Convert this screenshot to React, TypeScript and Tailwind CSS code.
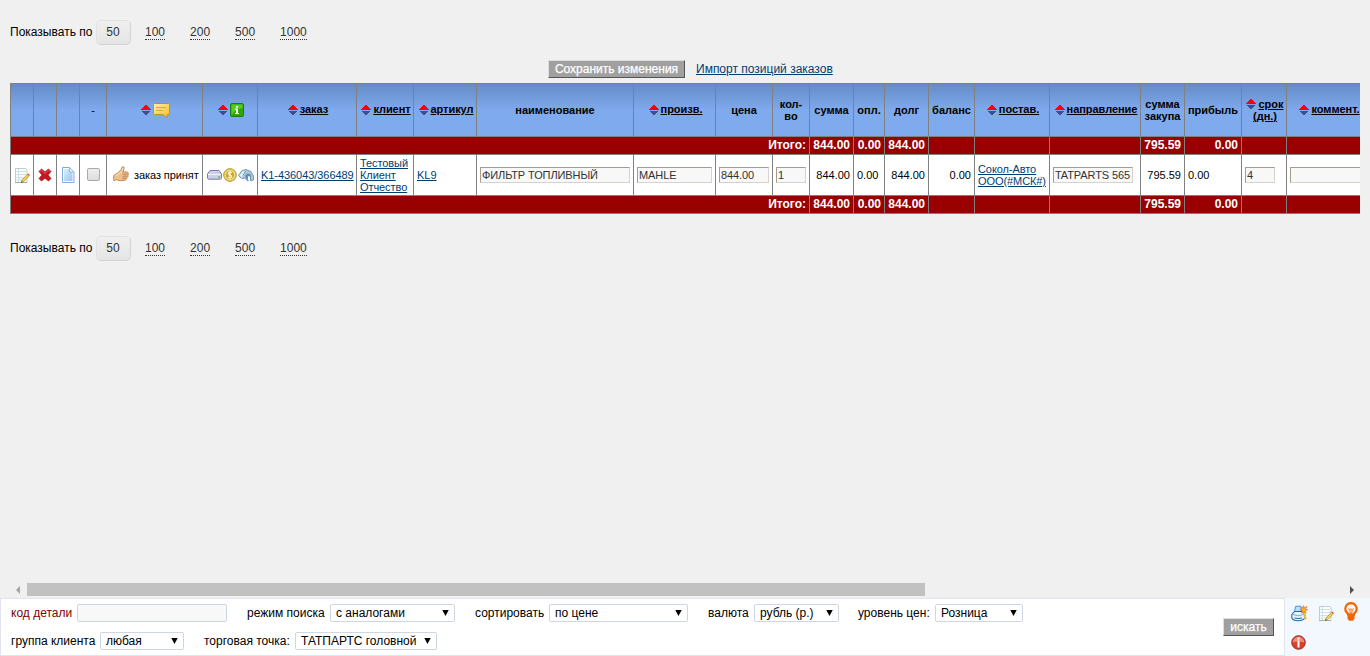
import React from "react";

const Sort = () => (
  <svg width="10" height="12" viewBox="0 0 10 12" shapeRendering="crispEdges" className="relative inline-block shrink-0">
    <path d="M0 6 5 .5 10 6z" fill="#fb0008" />
    <path d="M0 6.500 5 12l5-5.500z" fill="#3d4f8f" />
  </svg>
);

const Note = () => (
  <svg width="16" height="17" viewBox="0 0 16 17" className="block shrink-0">
    <path d="M1.500 1.500h10l1.500 1v13H1.500z" fill="#fbfdfc" stroke="#c3cdcb" />
    <path d="M2 4.500h10M2 7.500h10M2 10.500h9M2 13h8M4.500 2v13" stroke="#cddfe0" strokeWidth=".9" />
    <path d="M1 15.500h12" stroke="#9fb3ae" />
    <path d="M13.500 7.200l1.700 1.700-5.500 5.700-2.300.9.600-2.500z" fill="#f8d64a" stroke="#8e752e" strokeWidth=".6" />
    <path d="m13.300 7.200 1.900 1.900.7-1.200-1.500-1.500z" fill="#e2553a" />
    <path d="m7.200 15.700.6-1.500.9.900z" fill="#222" />
  </svg>
);

const Cross = () => (
  <svg width="14" height="14" viewBox="0 0 14 14" className="block shrink-0">
    <path d="m1 3.500 2.500-2.500L7 4l3.500-3L13 3.500 9.900 7l3.100 3.500-2.500 2.500L7 10l-3.500 3L1 10.500 4.100 7z" fill="#c9161e" stroke="#a50f16" strokeWidth=".8" strokeLinejoin="round" />
    <path d="m2 3.500 1.500-1.300L7 5.500l3.500-3.300L12 3.400" fill="none" stroke="#e8686b" strokeWidth=".9" />
  </svg>
);

const Page = () => (
  <svg width="14" height="16" viewBox="0 0 14 16" className="block shrink-0">
    <defs>
      <linearGradient id="page" x1="0" y1="0" x2="1" y2="1">
        <stop offset="0" stopColor="#dcefff" />
        <stop offset="1" stopColor="#8fc6fb" />
      </linearGradient>
    </defs>
    <path d="M1.500.5h7L13 5v10.500H1.500z" fill="#fff" stroke="#7fabdc" />
    <path d="M3 2h5l3.500 3.500V14H3z" fill="url(#page)" />
    <path d="M8.500.5V5H13z" fill="#f4faff" stroke="#7eaee0" strokeWidth=".8" />
  </svg>
);

const Comment = () => (
  <svg width="17" height="15" viewBox="0 0 17 15" className="block shrink-0">
    <defs>
      <linearGradient id="cm" x1="0" y1="0" x2="1" y2="1">
        <stop offset="0" stopColor="#fff3a0" />
        <stop offset="1" stopColor="#f6bd20" />
      </linearGradient>
    </defs>
    <path d="M1.500.5h14l1 1v9l-1 1h-1.300v3L9.800 11.500H1.500l-1-1v-9z" fill="url(#cm)" stroke="#c7901b" />
    <path d="M3 4.500h10M3 7.500h7" stroke="#d3ae48" />
  </svg>
);

const Info = () => (
  <svg width="14" height="14" viewBox="0 0 14 14" className="block shrink-0">
    <rect x=".5" y=".5" width="13" height="13" rx="1.500" fill="#2fa60a" stroke="#178014" />
    <path d="M1.500 12V1.500H12.500V5Q5 6 1.500 12z" fill="#5cc926" />
    <path d="M6 3h2v1.500H6zM5 5.500h3V10h1v1H5v-1h1V6.500H5z" fill="#fff" />
  </svg>
);

const Thumb = () => (
  <svg width="16" height="16" viewBox="0 0 16 16" className="relative -top-px block shrink-0">
    <path d="M.8 9.500 5 6.800 8.200 3.500 9.200.9q2-.6 2 1.200L10 6h4q1.500.3 1.200 1.600.6 1-.3 2 .3 1.200-.8 1.900.1 1.300-1.100 1.600-.2 1.400-1.700 1.500H6L3 13.500l-2 1.300q-1-2.300-.2-5.300z" fill="#efc08c" stroke="#b98049" strokeWidth=".9" />
    <path d="M9.500 8.200h5M9.500 10.200h4.700M9 12.300h4" stroke="#a97545" strokeWidth=".8" />
    <path d="M2 10 6 7.800 9.200 4.300l1-2.500" stroke="#ffe3bd" fill="none" />
  </svg>
);

const Drive = () => (
  <svg width="15" height="10" viewBox="0 0 15 10" className="block shrink-0">
    <path d="M3 .5h9l2.500 3.500v4l-1 1.200h-12L.5 8V4z" fill="#cdcdee" stroke="#7a7aab" />
    <path d="M1 4.500h13" stroke="#f4f4ff" />
    <circle cx="12" cy="6.900" r="1" fill="#5bc236" />
  </svg>
);

const Coin = () => (
  <svg width="14" height="14" viewBox="0 0 14 14" className="relative -left-px block shrink-0">
    <circle cx="7" cy="7" r="6.300" fill="#f4d455" stroke="#a8912b" />
    <circle cx="7" cy="7" r="4.700" fill="#c9a838" stroke="#fbeea4" strokeWidth=".8" />
    <path d="M9 4.700Q7 3.600 5.500 4.700 5 6.500 7 7t1.800 2.200q-1.500 1.300-3.800.1M7 3v8" fill="none" stroke="#fff9d6" strokeWidth="1.100" />
  </svg>
);

const Truck = () => (
  <svg width="16" height="13" viewBox="0 0 16 13" className="relative -left-[2px] block shrink-0">
    <path d="M.5 6.500 4 1.500 8 .5 13 2.500l2.500 4.500v4l-2.500.9-1.500-1.400L9.500 12 7 9 3.500 9.500z" fill="#abc8df" stroke="#6f93af" strokeWidth=".9" />
    <path d="m1.500 6.500 3-4L8 1.500 5.500 5.500 4 8.500z" fill="#e3f1fb" />
    <path d="M7.500 6q2.500-3 5.500 0v4.500h-1V7.500h-2v4L7.500 8.500z" fill="#5f8fb4" />
    <path d="M10 7.500h2v3.500h-2z" fill="#fff" />
    <path d="M5 6.500 7.500 2" stroke="#6f93af" />
  </svg>
);

const Printer = () => (
  <svg width="17" height="17" viewBox="0 0 17 17" className="relative block shrink-0">
    <path d="M4.500 1.500 9.500 1l1.500 6H3.500z" fill="#b9defc" stroke="#4a93de" />
    <path d="M.8 9.500 3.500 6.500h7.500L14 9.500V13q-2 2.700-7 2.700T.8 13z" fill="#e9f2fa" stroke="#2469ab" strokeWidth="1.100" />
    <path d="M2 9.500q5 2.500 10.500 0" stroke="#86abd0" fill="none" />
    <path d="M3.500 13q3.500 1.200 7.500 0" stroke="#2469ab" fill="none" />
    <path d="m12.700 5 1.500 8 1 1.200" stroke="#e0c43c" strokeWidth="2" fill="none" />
    <path d="m12.500.5.800 2.300 2.700-1.500-1.300 2.700 2 .8-2.300.9.700 2.300-2.400-1.400-2 1.700.5-2.600-2.400-.6 2.300-1.200-.8-2.100 2 .9z" fill="#f7b020" stroke="#e4571b" strokeWidth=".5" />
  </svg>
);

const Bulb = () => (
  <svg width="14" height="19" viewBox="0 0 14 19" className="block shrink-0">
    <path d="M7 1.100a5.700 5.700 0 0 0-3.400 10.200l.7 1.700h5.400l.7-1.700A5.700 5.700 0 0 0 7 1.100z" fill="#fff6ee" stroke="#f26500" strokeWidth="2.200" />
    <path d="m4.300 6.500 1.500 1.300L7 6.800l1.200 1 1.500-1.300M5.900 7.800 6.300 12M8.100 7.800 7.700 12" fill="none" stroke="#f26500" strokeWidth=".9" />
    <path d="M3.500 11.500h7v5L9 18.700H5l-1.500-2.200z" fill="#f26500" />
  </svg>
);

const RedInfo = () => (
  <svg width="15" height="15" viewBox="0 0 15 15" className="block shrink-0">
    <circle cx="7.500" cy="7.500" r="6.800" fill="#d8402a" stroke="#a0301f" />
    <path d="M1.700 7.500a5.800 5.800 0 0 1 11.600 0Q7.500 5.500 1.700 7.500z" fill="#ef8d78" />
    <path d="M6.500 2.500h2v2h-2zM6.500 5.500h2v7h-2z" fill="#fff" />
  </svg>
);

const cols =
  "grid w-[1361px] grid-cols-[23px_23px_23px_27px_96px_55px_99px_57px_63px_157px_82px_57px_37px_44px_31px_44px_46px_75px_91px_44px_57px_45px_84px]";
const cell = "flex min-w-0 items-center border-r border-b border-[#808080] ";

const H = ({ t, sort, icon, up }: { t?: React.ReactNode; sort?: boolean; icon?: React.ReactNode; up?: boolean }) => (
  <div className={cell + "justify-center text-center font-bold " + (sort ? "pl-[2px]" : "")}>
    {sort && !up && <Sort />}
    {icon && <span className="ml-[2px]">{icon}</span>}
    {t && <span className={sort && !up ? "relative -top-px ml-[2px] tracking-[-0.05px] underline" : ""}>{t}</span>}
  </div>
);

const Total = () => (
  <div className={cols + " h-[18px] bg-[#990000] text-[12px] font-bold text-white"}>
    <div className={cell + "col-span-13 justify-end pr-[3px] pb-[2px]"}>Итого:</div>
    {["844.00", "0.00", "844.00", "", "", "", "795.59", "0.00", "", ""].map((v, i) => (
      <div key={i} className={cell + "justify-end pr-[3px] pb-[2px]"}>{v}</div>
    ))}
  </div>
);

const Field = ({ v, w }: { v: string; w: string }) => (
  <input
    readOnly
    value={v}
    className={"h-4 shrink-0 border border-t-[#a49c90] border-l-[#a49c90] border-r-[#d6d3cd] border-b-[#d6d3cd] bg-[#f8f8f8] pl-px text-[11px] tracking-[-0.1px] text-[#333] outline-none " + w}
  />
);

const A = ({ children }: { children: React.ReactNode }) => (
  <a className="text-[#003e72] underline">{children}</a>
);

const Pager = () => (
  <div className="flex h-[25px] items-center text-[12px] leading-[14px]">
    <span className="relative -top-px w-[86px] whitespace-nowrap">Показывать по</span>
    <span className="flex h-[25px] w-[35px] items-center justify-center rounded-[5px] border border-[#e2e2e2] border-r-[#d2d2d2] border-b-[#d2d2d2] bg-linear-to-b from-[#efefef] to-[#e5e5e5] pr-px pb-[2px] text-[#333]">50</span>
    {["100", "200", "500", "1000"].map((n, i) => (
      <span key={n} className={(i === 0 ? "ml-[14px]" : "ml-[25px]") + " border-b border-dotted border-[#333] text-[#333]"}>{n}</span>
    ))}
  </div>
);

const Select = ({ v, w, ml }: { v: string; w: string; ml: string }) => (
  <div className={"flex h-[18px] items-center justify-between rounded-[2px] border border-[#cfd5e2] bg-white pr-[5px] pl-[5px] whitespace-nowrap " + w + " " + ml}>
    <span>{v}</span>
    <svg width="7" height="6" viewBox="0 0 7 6"><path d="M.3 0h6.400L3.500 6z" fill="#000" /></svg>
  </div>
);

const Btn = ({ t, w }: { t: string; w: string }) => (
  <button className={"h-[18px] border border-t-[#ddd] border-l-[#ddd] border-r-[#555] border-b-[#555] bg-[#a0a0a0] text-[12px] leading-[15px] whitespace-nowrap text-white [-webkit-text-stroke:0.25px_white] " + w}>{t}</button>
);

export default function App() {
  return (
    <div className="flex h-[656px] w-[1370px] flex-col overflow-hidden bg-[#f0f0f0] font-['Liberation_Sans',Arial,sans-serif] text-black">
      <main className="h-[582px] shrink-0 px-[10px] pt-[20px]">
        <Pager />
        <div className="mt-[15px] flex h-[18px] pl-[538px] text-[12px]">
          <Btn t="Сохранить изменения" w="w-[137px]" />
          <span className="ml-[11px] leading-[19px]"><A>Импорт позиций заказов</A></span>
        </div>
        <div className="mt-[5px] w-[1350px] overflow-hidden border-t border-l border-[#808080] text-[11px] leading-[12px]">
          <div className={cols + " h-[53px] bg-linear-to-b from-[#658cc8] to-[#80aaee] to-50%"}>
            <H /><H /><H /><H t={<span className="inline-block font-normal">-</span>} />
            <H sort icon={<Comment />} />
            <H sort icon={<Info />} />
            <H sort t="заказ" />
            <H sort t="клиент" />
            <H sort t="артикул" />
            <H t="наименование" />
            <H sort t="произв." />
            <H t="цена" />
            <H t={<>кол-<br />во</>} />
            <H t="сумма" />
            <H t="опл." />
            <H t="долг" />
            <H t="баланс" />
            <H sort t="постав." />
            <H sort t="направление" />
            <H t={<>сумма<br />закупа</>} />
            <H t="прибыль" />
            <H sort up t={<><span className="flex items-center justify-center gap-[2px]"><Sort /><u>срок</u></span><u>(дн.)</u></>} />
            <H sort t="коммент." />
          </div>
          <Total />
          <div className={cols + " h-[41px] bg-white"}>
            <div className={cell + "justify-center"}><Note /></div>
            <div className={cell + "justify-center"}><Cross /></div>
            <div className={cell + "justify-center"}><Page /></div>
            <div className={cell + "justify-center"}>
              <span className="relative -top-px h-[13px] w-[13px] rounded-[2px] border border-[#aaa] bg-linear-to-b from-[#eee] to-[#ddd]" />
            </div>
            <div className={cell + "pl-[6px] tracking-[-0.08px] whitespace-nowrap"}><Thumb /><span className="ml-[5px]">заказ принят</span></div>
            <div className={cell + "gap-[2px] pl-[4px]"}><Drive /><Coin /><Truck /></div>
            <div className={cell + "pl-[3px] tracking-[-0.06px]"}><A>K1-436043/366489</A></div>
            <div className={cell + "pl-[3px] tracking-[-0.08px]"}><A>Тестовый<br />Клиент<br />Отчество</A></div>
            <div className={cell + "pl-[3px]"}><A>KL9</A></div>
            <div className={cell + "pl-[3px]"}><Field v="ФИЛЬТР ТОПЛИВНЫЙ" w="w-[150px]" /></div>
            <div className={cell + "pl-[3px]"}><Field v="MAHLE" w="w-[75px]" /></div>
            <div className={cell + "pl-[3px]"}><Field v="844.00" w="w-[50px]" /></div>
            <div className={cell + "pl-[3px]"}><Field v="1" w="w-[30px]" /></div>
            <div className={cell + "justify-end pr-[3px]"}>844.00</div>
            <div className={cell + "pl-[3px]"}>0.00</div>
            <div className={cell + "justify-end pr-[3px]"}>844.00</div>
            <div className={cell + "justify-end pr-[3px]"}>0.00</div>
            <div className={cell + "pl-[3px] tracking-[-0.08px] whitespace-nowrap"}><A>Сокол-Авто<br />ООО(#МСК#)</A></div>
            <div className={cell + "pl-[3px]"}><Field v="TATPARTS 565" w="w-[80px]" /></div>
            <div className={cell + "justify-end pr-[3px]"}>795.59</div>
            <div className={cell + "pl-[3px]"}>0.00</div>
            <div className={cell + "pl-[3px]"}><Field v="4" w="w-[30px]" /></div>
            <div className={cell + "pl-[3px]"}><Field v="" w="w-[77px]" /></div>
          </div>
          <Total />
        </div>
        <div className="mt-[22px]"><Pager /></div>
      </main>
      <div className="flex h-[16px] shrink-0 items-start pt-px pr-[15px] pl-[15px]">
        <svg width="5" height="8" viewBox="0 0 5 8" className="mt-[3px]"><path d="M5 0v8L1 4z" fill="#a3a3a3" /></svg>
        <div className="ml-[7px] h-[13px] w-[898px] bg-[#c1c1c1]" />
        <svg width="5" height="8" viewBox="0 0 5 8" className="mt-[3px] ml-auto"><path d="M0 0v8l4-4z" fill="#505050" /></svg>
      </div>
      <footer className="flex h-[58px] shrink-0 bg-[#f3f8fe] text-[12px] leading-[14px]">
        <div className="flex w-[1285px] border border-[#e0e4ef] bg-white">
          <div className="flex flex-col gap-[10px] pt-[5px] pl-[10px]">
            <div className="flex items-center whitespace-nowrap">
              <span className="w-[66px] text-[#800000]">код детали</span>
              <span className="h-[18px] w-[150px] rounded-[2px] border border-[#cfd5e2] bg-[#f8f8f8]" />
              <span className="ml-[20px] w-[78px]">режим поиска</span>
              <Select v="с аналогами" w="w-[125px]" ml="ml-[5px]" />
              <span className="ml-[20px] w-[70px]">сортировать</span>
              <Select v="по цене" w="w-[139px]" ml="ml-[4px]" />
              <span className="ml-[20px] w-[41px]">валюта</span>
              <Select v="рубль (р.)" w="w-[85px]" ml="ml-[5px]" />
              <span className="ml-[19px] w-[73px]">уровень цен:</span>
              <Select v="Розница" w="w-[88px]" ml="ml-[4px]" />
            </div>
            <div className="flex items-center whitespace-nowrap">
              <span className="w-[85px]">группа клиента</span>
              <Select v="любая" w="w-[84px]" ml="ml-[4px]" />
              <span className="ml-[20px] w-[87px]">торговая точка:</span>
              <Select v="ТАТПАРТС головной" w="w-[142px]" ml="ml-[4px]" />
            </div>
          </div>
          <div className="mt-[19px] mr-[10px] ml-auto"><Btn t="искать" w="w-[51px]" /></div>
        </div>
        <div className="grid h-[56px] flex-1 grid-cols-[27px_26px_1fr] grid-rows-[30px_28px] items-center pl-[6px]">
          <Printer /><Note /><div className="-mt-[3px]"><Bulb /></div><RedInfo />
        </div>
      </footer>
    </div>
  );
}
